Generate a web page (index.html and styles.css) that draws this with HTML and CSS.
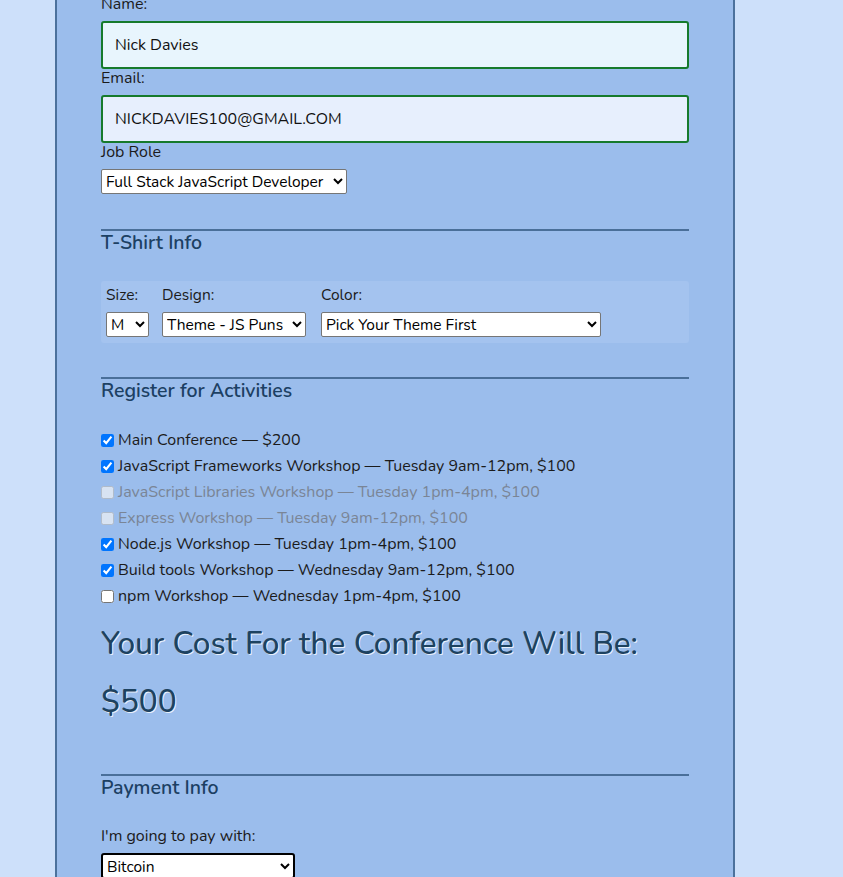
FILE: index.html
```html
<!DOCTYPE html>
<html lang="en">
<head>
<meta charset="utf-8">
<title>Register</title>
<link rel="stylesheet" href="styles.css">
</head>
<body>
<div class="container">
  <form class="form">
    <label class="lbl" for="name">Name:</label>
    <input class="text-input name-input" id="name" type="text" value="Nick Davies">
    <label class="lbl" for="mail">Email:</label>
    <input class="text-input mail-input" id="mail" type="email" value="NICKDAVIES100@GMAIL.COM">
    <label class="lbl" for="title">Job Role</label>
    <select class="sel job-sel" id="title">
      <option>Full Stack JavaScript Developer</option>
    </select>

    <section class="section shirt-section">
      <h2 class="section-title">T-Shirt Info</h2>
      <div class="shirt-box">
        <div class="shirt-col">
          <label class="lbl-small">Size:</label>
          <select class="sel size-sel"><option>M</option></select>
        </div>
        <div class="shirt-col">
          <label class="lbl-small">Design:</label>
          <select class="sel design-sel"><option>Theme - JS Puns</option></select>
        </div>
        <div class="shirt-col color-col">
          <label class="lbl-small">Color:</label>
          <select class="sel color-sel"><option>Pick Your Theme First</option></select>
        </div>
      </div>
    </section>

    <section class="section activities">
      <h2 class="section-title">Register for Activities</h2>
      <div class="act-list">
        <label class="act"><input type="checkbox" checked> Main Conference — $200</label>
        <label class="act"><input type="checkbox" checked> JavaScript Frameworks Workshop — Tuesday 9am-12pm, $100</label>
        <label class="act disabled"><input type="checkbox" disabled> JavaScript Libraries Workshop — Tuesday 1pm-4pm, $100</label>
        <label class="act disabled"><input type="checkbox" disabled> Express Workshop — Tuesday 9am-12pm, $100</label>
        <label class="act"><input type="checkbox" checked> Node.js Workshop — Tuesday 1pm-4pm, $100</label>
        <label class="act"><input type="checkbox" checked> Build tools Workshop — Wednesday 9am-12pm, $100</label>
        <label class="act"><input type="checkbox"> npm Workshop — Wednesday 1pm-4pm, $100</label>
      </div>
      <h3 class="cost">Your Cost For the Conference Will Be:</h3>
      <h3 class="cost">$500</h3>
    </section>

    <section class="section payment">
      <h2 class="section-title">Payment Info</h2>
      <label class="lbl pay-lbl" for="payment">I'm going to pay with:</label>
      <select class="sel pay-sel" id="payment"><option>Bitcoin</option></select>
    </section>
  </form>
</div>
</body>
</html>
```

FILE: styles.css
```css
html, body {
  margin: 0;
  padding: 0;
}
body {
  background: #cde0fa;
  font-family: "Nunito", "Lato", "Noto Sans", sans-serif;
  font-size: 16px;
  color: #1b1b1b;
  overflow: hidden;
  height: 877px;
}
.container {
  width: 680px;
  margin-left: 55px;
  background: #9bbdec;
  border-left: 2px solid #4b719c;
  border-right: 2px solid #4b719c;
  min-height: 1200px;
  padding: 0 44px;
  box-sizing: border-box;
}
.form {
  display: flex;
  flex-direction: column;
  margin-top: -5px;
}
.lbl {
  display: block;
  line-height: 18px;
  margin-bottom: 8px;
}
.text-input {
  box-sizing: border-box;
  height: 48px;
  width: 588px;
  border: 2px solid #167a2c;
  border-radius: 3px;
  padding: 0 12px;
  font-family: inherit;
  font-size: 16px;
  color: #111;
  outline: none;
  margin: 0;
}
.name-input { background: #e8f5fd; }
.mail-input { background: #e7effd; }
.sel {
  font-family: inherit;
  font-size: 15.5px;
  height: 25px;
  background: #fff;
  border: 1px solid #767676;
  border-radius: 2px;
  color: #000;
  padding: 0;
  margin: 0;
}
.job-sel { width: 246px; align-self: flex-start; }
.section {
  border-top: 2px solid #4a6f99;
  display: flex;
  flex-direction: column;
}
.section-title {
  margin: 0;
  font-size: 19.5px;
  font-weight: 600;
  line-height: 24px;
  color: #1c4063;
}
.shirt-section { margin-top: 35px; }
.shirt-box {
  margin-top: 26px;
  background: #a4c3ef;
  border-radius: 3px;
  display: flex;
  gap: 13px;
  padding: 5px 5px 6px;
}
.shirt-col {
  display: flex;
  flex-direction: column;
  gap: 8px;
}
.color-col { margin-left: 2px; }
.lbl-small {
  line-height: 18px;
  font-size: 15.5px;
}
.size-sel { width: 43px; }
.design-sel { width: 144px; }
.color-sel { width: 280px; }
.activities { margin-top: 34px; }
.act-list {
  margin-top: 24px;
  display: flex;
  flex-direction: column;
}
.act {
  display: flex;
  align-items: center;
  height: 26px;
  font-size: 16px;
  gap: 4px;
}
.act input {
  margin: 0;
  width: 13px;
  height: 13px;
}
.act.disabled { color: #7a8596; }
.cost {
  margin: 0;
  font-size: 31.5px;
  font-weight: 500;
  color: #1d4260;
  text-shadow: 1px 1px 0 #e8f0fb;
  line-height: 58px;
}
.act-list + .cost { margin-top: 6px; }
.payment { margin-top: 43px; }
.pay-lbl { margin-top: 27px; }
.pay-sel {
  width: 194px;
  height: 26px;
  border: 2px solid #000;
  border-radius: 3px;
  align-self: flex-start;
  padding: 0;
  line-height: 20px;
}
```
